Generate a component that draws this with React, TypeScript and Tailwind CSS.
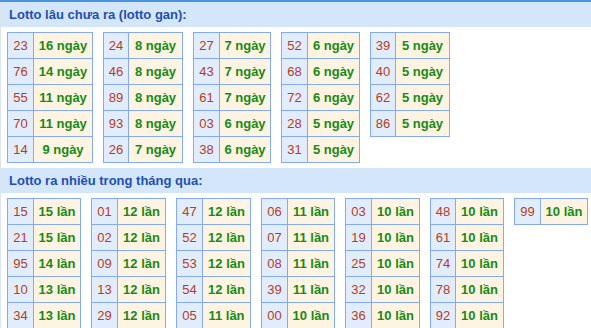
import React from "react";

type Row = [string, string];
type Tbl = { num: number; val: number; rows: Row[] };

const sec1: Tbl[] = [
  { num: 26, val: 59, rows: [["23", "16 ngày"], ["76", "14 ngày"], ["55", "11 ngày"], ["70", "11 ngày"], ["14", "9 ngày"]] },
  { num: 25, val: 54, rows: [["24", "8 ngày"], ["46", "8 ngày"], ["89", "8 ngày"], ["93", "8 ngày"], ["26", "7 ngày"]] },
  { num: 26, val: 51, rows: [["27", "7 ngày"], ["43", "7 ngày"], ["61", "7 ngày"], ["03", "6 ngày"], ["38", "6 ngày"]] },
  { num: 26, val: 52, rows: [["52", "6 ngày"], ["68", "6 ngày"], ["72", "6 ngày"], ["28", "5 ngày"], ["31", "5 ngày"]] },
  { num: 25, val: 54, rows: [["39", "5 ngày"], ["40", "5 ngày"], ["62", "5 ngày"], ["86", "5 ngày"]] },
];

const sec2: Tbl[] = [
  { num: 26, val: 47, rows: [["15", "15 lần"], ["21", "15 lần"], ["95", "14 lần"], ["10", "13 lần"], ["34", "13 lần"]] },
  { num: 26, val: 48, rows: [["01", "12 lần"], ["02", "12 lần"], ["09", "12 lần"], ["13", "12 lần"], ["29", "12 lần"]] },
  { num: 26, val: 48, rows: [["47", "12 lần"], ["52", "12 lần"], ["53", "12 lần"], ["54", "12 lần"], ["05", "11 lần"]] },
  { num: 26, val: 47, rows: [["06", "11 lần"], ["07", "11 lần"], ["08", "11 lần"], ["39", "11 lần"], ["00", "10 lần"]] },
  { num: 26, val: 48, rows: [["03", "10 lần"], ["19", "10 lần"], ["25", "10 lần"], ["32", "10 lần"], ["36", "10 lần"]] },
  { num: 25, val: 48, rows: [["48", "10 lần"], ["61", "10 lần"], ["74", "10 lần"], ["78", "10 lần"], ["92", "10 lần"]] },
  { num: 26, val: 47, rows: [["99", "10 lần"]] },
];

function Table({ t }: { t: Tbl }) {
  return (
    <div className="flex flex-col border-l border-t border-[#84aaf2] shrink-0">
      {t.rows.map(([n, v], i) => (
        <div key={i} className="flex h-[26px]">
          <div
            className="flex items-center justify-center border-r border-b border-[#84aaf2] bg-[#e1edfc] text-[#b63c1e] text-[13px]"
            style={{ width: t.num }}
          >
            {n}
          </div>
          <div
            className="flex items-center justify-center border-r border-b border-[#84aaf2] bg-[#fff3e1] text-[#178a17] text-[13px] font-bold whitespace-nowrap"
            style={{ width: t.val }}
          >
            {v}
          </div>
        </div>
      ))}
    </div>
  );
}

function Header({ title }: { title: string }) {
  return (
    <div className="h-[25px] bg-[#d4e6fa] flex items-center pl-[8px] text-[13px] font-bold text-[#1f4fb5]">
      {title}
    </div>
  );
}

export default function App() {
  return (
    <div
      className="w-[591px] h-[328px] overflow-hidden bg-white border-t-2 border-[#4a92de]"
      style={{ fontFamily: '"Liberation Sans", Arial, sans-serif' }}
    >
      <div className="border-l border-[#dae5f0] h-full">
        <Header title="Lotto lâu chưa ra (lotto gan):" />
        <div className="flex items-start gap-[10px] pl-[6px] pt-[5px] pb-[5px]">
          {sec1.map((t, i) => (
            <Table key={i} t={t} />
          ))}
        </div>
        <Header title="Lotto ra nhiều trong tháng qua:" />
        <div className="flex items-start gap-[10px] pl-[6px] pt-[5px]">
          {sec2.map((t, i) => (
            <Table key={i} t={t} />
          ))}
        </div>
      </div>
    </div>
  );
}
